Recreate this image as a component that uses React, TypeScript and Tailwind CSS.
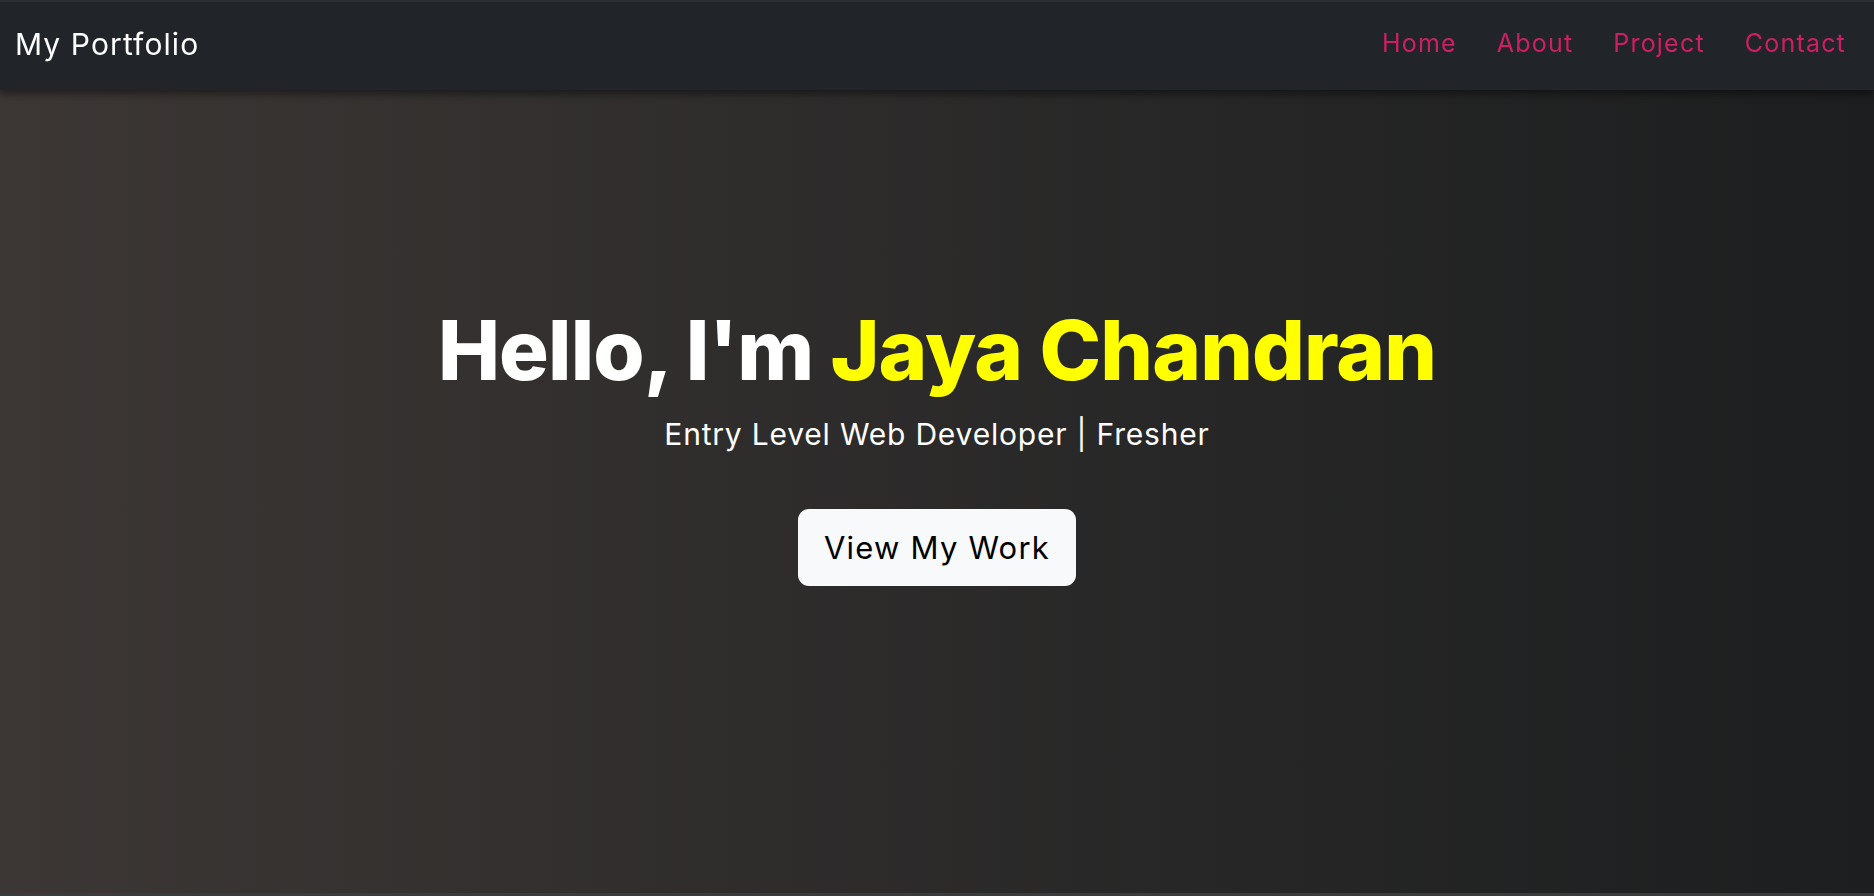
const links = ["Home", "About", "Project", "Contact"]

export default function App() {
  return (
    <div className="min-h-screen font-['Inter','Noto_Sans',sans-serif]">
      <nav className="fixed top-0 inset-x-0 z-10 h-[90px] bg-[#212529] border-t-2 border-[#2a2d31] shadow-[0_4px_8px_rgba(0,0,0,0.45)] flex items-center justify-between pl-[15px] pr-[28px] pb-[4px]">
        <a className="text-[30px] text-white tracking-[1.1px]">My Portfolio</a>
        <ul className="flex items-center gap-[40px] text-[25px] tracking-[1.2px] text-[#cf1f64]">
          {links.map((l) => (
            <li key={l}>{l}</li>
          ))}
        </ul>
      </nav>

      <section className="h-screen bg-gradient-to-r from-[#3c3735] to-[#1c1e1f] flex flex-col items-center justify-center text-center border-b-[3px] border-[#3a3b3c]">
        <h1 className="text-[83px] leading-[1.2] font-extrabold text-white tracking-[-0.9px] mt-[-6px]">
          Hello, I'm <span className="text-[#ffff00]">Jaya Chandran</span>
        </h1>
        <p className="text-[30px] tracking-[0.8px] text-white mt-[12px]">Entry Level Web Developer | Fresher</p>
        <button className="mt-[52px] h-[77px] px-[26px] rounded-[11px] bg-[#f8f9fa] text-black text-[31px] tracking-[1.2px]">
          View My Work
        </button>
      </section>
    </div>
  )
}
